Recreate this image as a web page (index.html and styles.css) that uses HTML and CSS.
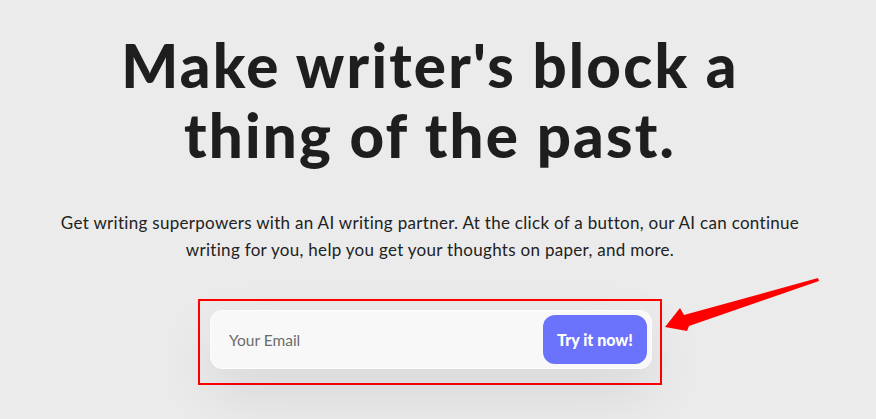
FILE: index.html
```html
<!DOCTYPE html>
<html>
<head>
	<title>Writer's Block</title>
	<meta name="viewport" content="width=device-width, initial-scale=1.0">
	<link rel="stylesheet" href="styles.css">
</head>
<body>
	<main class="hero">
		<h1 class="hero-title">Make writer's block a<br>thing of the past.</h1>
		<p class="hero-text">Get writing superpowers with an AI writing partner. At the click of a button, our AI can continue<br>writing for you, help you get your thoughts on paper, and more.</p>
		<div class="signup-frame">
			<form class="signup" onsubmit="return false">
				<input type="email" class="signup-input" placeholder="Your Email">
				<button type="submit" class="signup-btn">Try it now!</button>
			</form>
		</div>
	</main>
	<svg class="callout" viewBox="0 0 876 419" width="876" height="419">
		<polygon points="665,327 680,308 684,315 818,278 819,281 689,326 687,331" fill="#ff0000"/>
	</svg>
</body>
</html>
```

FILE: styles.css
```css
html, body {
	margin: 0;
	padding: 0;
	background: #ebebeb;
	color: #1e1e1e;
	font-family: Lato, "Open Sans", sans-serif;
}

body {
	position: relative;
	height: 419px;
	overflow: hidden;
}

.hero {
	display: flex;
	flex-direction: column;
	align-items: center;
	padding: 30px 16px 0 0;
	text-align: center;
}

.hero-title {
	margin: 0;
	font-size: 60px;
	line-height: 70px;
	font-weight: 900;
	letter-spacing: 2.2px;
}

.hero-text {
	margin: 39px 0 0;
	font-size: 17px;
	line-height: 27px;
	letter-spacing: 0.3px;
	color: #222;
}

.signup-frame {
	margin-top: 36px;
	padding: 9px 8px 14px 10px;
	border: 2px solid #ff0000;
}

.signup {
	display: flex;
	align-items: center;
	width: 432px;
	padding: 4px;
	background: #f8f8f8;
	border: 1px solid #fdfdfd;
	border-radius: 12px;
	box-shadow: 0 24px 60px rgba(0, 0, 0, 0.09);
}

.signup-input {
	flex: 1;
	min-width: 0;
	padding: 0 0 0 14px;
	border: none;
	background: transparent;
	font-family: inherit;
	font-size: 15.5px;
	color: #333;
	outline: none;
}

.signup-input::placeholder {
	color: #6b6b6b;
}

.signup-btn {
	width: 104px;
	height: 49px;
	border: none;
	border-radius: 12px;
	background: #6b73fd;
	color: #fff;
	font-family: inherit;
	font-size: 16px;
	font-weight: 900;
	cursor: pointer;
}

.callout {
	position: absolute;
	left: 0;
	top: 0;
	pointer-events: none;
}
```
